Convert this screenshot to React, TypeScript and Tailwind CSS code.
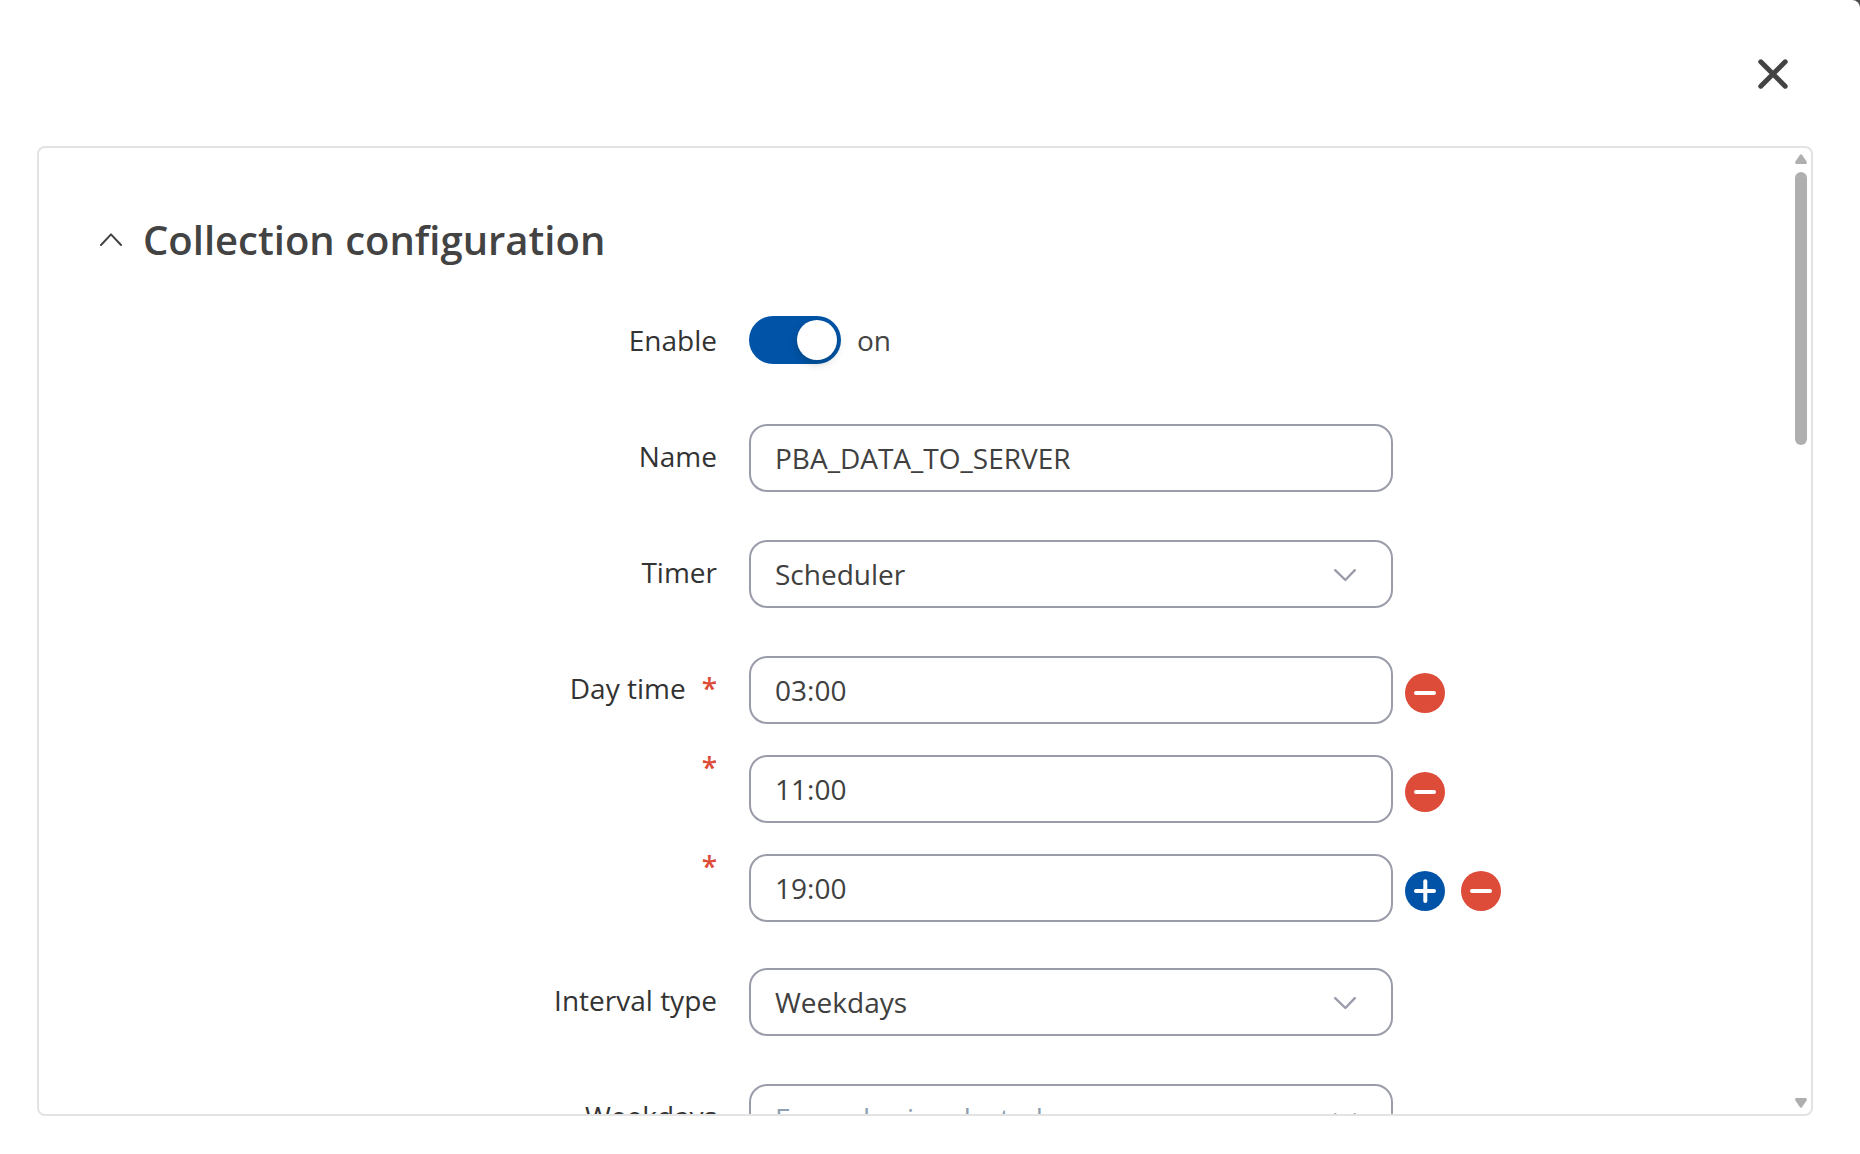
import { useState } from 'react';
import type { ReactNode } from 'react';

const fieldClass =
  'block w-full h-17 rounded-[18px] border-2 border-[#9a9ca9] bg-white pl-6 text-[28px] leading-10 text-[#404040] outline-none focus:border-[#0053a7]';

function Row({
  label,
  htmlFor,
  className = '',
  children,
  actions,
}: {
  label: ReactNode;
  htmlFor: string;
  className?: string;
  children: ReactNode;
  actions?: ReactNode;
}) {
  return (
    <div className={`grid grid-cols-[11fr_644px_5fr] ${className}`}>
      <label
        htmlFor={htmlFor}
        className="flex justify-end pt-3 pr-8 text-[28px] leading-10 whitespace-pre text-[#333333]"
      >
        {label}
      </label>
      {children}
      <div className="flex gap-4 pt-[17px] pl-3">{actions}</div>
    </div>
  );
}

function SelectField({
  id,
  options,
  placeholder = false,
}: {
  id: string;
  options: string[];
  placeholder?: boolean;
}) {
  return (
    <div className="relative">
      <select
        id={id}
        className={`${fieldClass} appearance-none ${placeholder ? 'text-[#8c9fb3]!' : ''}`}
      >
        {options.map((option) => (
          <option key={option}>{option}</option>
        ))}
      </select>
      <svg
        viewBox="0 0 24 14"
        className="pointer-events-none absolute top-7 right-9 h-3.5 w-6"
        fill="none"
        stroke="#9a9ca9"
        strokeWidth="2.4"
        strokeLinecap="round"
        strokeLinejoin="round"
      >
        <path d="M2.2 2.2 12.4 12 21.8 2.2" />
      </svg>
    </div>
  );
}

function RoundButton({
  kind,
  onClick,
}: {
  kind: 'add' | 'remove';
  onClick: () => void;
}) {
  return (
    <button
      type="button"
      onClick={onClick}
      aria-label={kind === 'add' ? 'Add day time' : 'Remove day time'}
      className={`size-10 shrink-0 rounded-full ${kind === 'add' ? 'bg-[#0053a7]' : 'bg-[#dd4b39]'}`}
    >
      <svg
        viewBox="0 0 40 40"
        className="size-10"
        stroke="white"
        strokeWidth="4"
        strokeLinecap="round"
      >
        <path d="M11 20H29" />
        {kind === 'add' && <path d="M20.3 10.2V30" />}
      </svg>
    </button>
  );
}

const Required = () => (
  <span className="font-semibold text-[#dd4b39]">*</span>
);

export default function App() {
  const [open, setOpen] = useState(true);
  const [enabled, setEnabled] = useState(true);
  const [name, setName] = useState('PBA_DATA_TO_SERVER');
  const [times, setTimes] = useState(['03:00', '11:00', '19:00']);

  return (
    <div className="h-screen bg-[#4a4a4a] font-['Open_Sans',sans-serif]">
      <div className="flex h-full flex-col rounded-tr-lg bg-white pr-[47px] pb-[38px] pl-[37px]">
        <header className="flex h-[146px] shrink-0 items-start justify-end pt-[54px] pr-5">
          <button type="button" aria-label="Close" className="size-10">
            <svg
              viewBox="0 0 40 40"
              className="size-10"
              stroke="#434343"
              strokeWidth="5"
              strokeLinecap="round"
            >
              <path d="M7.8 7.8 32.2 32.2M32.2 7.8 7.8 32.2" />
            </svg>
          </button>
        </header>

        <main className="flex min-h-0 flex-1 overflow-hidden rounded-lg border-2 border-[#e3e3e3]">
          <form className="min-w-0 flex-1 overflow-y-auto pt-16 pr-[99px] pl-[61px] [scrollbar-width:none]">
            <h2 className="text-[40px] leading-14 font-semibold text-[#434343]">
              <button
                type="button"
                aria-expanded={open}
                onClick={() => setOpen(!open)}
                className="flex items-center gap-[19px]"
              >
                <svg
                  viewBox="0 0 24 14"
                  className={`h-3.5 w-6 ${open ? '' : 'rotate-180'}`}
                  fill="none"
                  stroke="#434343"
                  strokeWidth="2"
                  strokeLinecap="round"
                  strokeLinejoin="round"
                >
                  <path d="M1 12 11 1.4 21 12" />
                </svg>
                Collection configuration
              </button>
            </h2>

            {open && (
              <div className="pt-10">
                <Row label="Enable" htmlFor="enable">
                  <div className="flex items-center gap-4 pt-2">
                    <input
                      id="enable"
                      type="checkbox"
                      role="switch"
                      checked={enabled}
                      onChange={(e) => setEnabled(e.target.checked)}
                      className="h-12 w-23 appearance-none rounded-full bg-[#9a9ca9] p-1 before:block before:size-10 before:rounded-full before:bg-white before:shadow-[0_4px_8px_rgba(0,35,11,0.2)] checked:bg-[#0053a7] checked:before:ml-auto"
                    />
                    <span className="text-[28px] leading-10 text-[#434343]">
                      {enabled ? 'on' : 'off'}
                    </span>
                  </div>
                </Row>

                <Row label="Name" htmlFor="name" className="mt-15">
                  <input
                    id="name"
                    value={name}
                    onChange={(e) => setName(e.target.value)}
                    className={fieldClass}
                  />
                </Row>

                <Row label="Timer" htmlFor="timer" className="mt-12">
                  <SelectField id="timer" options={['Scheduler', 'Interval']} />
                </Row>

                <div className="mt-12 flex flex-col gap-[31px]">
                  {times.map((time, i) => (
                    <Row
                      key={i}
                      htmlFor={`time-${i}`}
                      label={
                        i === 0 ? (
                          <span className="flex gap-4">
                            Day time
                            <Required />
                          </span>
                        ) : (
                          <span className="-mt-5">
                            <Required />
                          </span>
                        )
                      }
                      actions={
                        <>
                          {i === times.length - 1 && (
                            <RoundButton
                              kind="add"
                              onClick={() => setTimes([...times, '00:00'])}
                            />
                          )}
                          <RoundButton
                            kind="remove"
                            onClick={() =>
                              setTimes(times.filter((_, n) => n !== i))
                            }
                          />
                        </>
                      }
                    >
                      <input
                        id={`time-${i}`}
                        value={time}
                        onChange={(e) =>
                          setTimes(
                            times.map((t, n) => (n === i ? e.target.value : t))
                          )
                        }
                        className={fieldClass}
                      />
                    </Row>
                  ))}
                </div>

                <Row
                  label="Interval type"
                  htmlFor="interval"
                  className="mt-[46px]"
                >
                  <SelectField id="interval" options={['Weekdays', 'Month']} />
                </Row>

                <Row label="Weekdays" htmlFor="weekdays" className="mt-12 pb-12">
                  <SelectField
                    id="weekdays"
                    options={['Every day is selected']}
                    placeholder
                  />
                </Row>
              </div>
            )}
          </form>

          {/* scrollbar */}
          <div className="flex w-6 shrink-0 flex-col items-center pt-1.5 pb-1.5 pl-1">
            <svg viewBox="0 0 12 10" className="h-2.5 w-3" fill="#afafaf">
              <path d="M5 .8Q6-.4 7 .8L11.6 7.5Q12.4 10 10.5 10H1.5Q-.4 10 .4 7.5Z" />
            </svg>
            <div className="flex w-3 flex-1 flex-col py-2">
              <div className="h-[29.7%] rounded-full bg-[#afafaf]" />
            </div>
            <svg viewBox="0 0 12 10" className="h-2.5 w-3" fill="#afafaf">
              <path d="M5 9.2Q6 10.4 7 9.2L11.6 2.5Q12.4 0 10.5 0H1.5Q-.4 0 .4 2.5Z" />
            </svg>
          </div>
        </main>
      </div>
    </div>
  );
}
